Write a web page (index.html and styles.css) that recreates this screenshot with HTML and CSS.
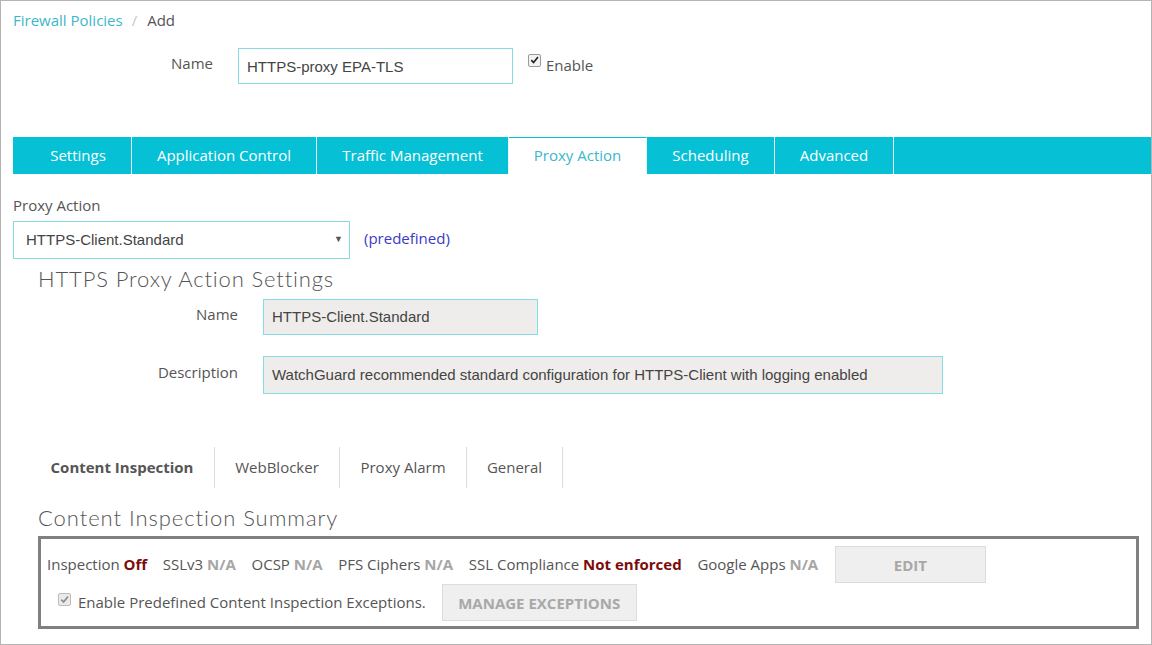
FILE: index.html
```html
<!DOCTYPE html>
<html>
<head>
<meta charset="utf-8">
<link rel="stylesheet" href="styles.css">
</head>
<body>
<div class="page">
  <div class="crumbs"><a class="crumb-link">Firewall Policies</a><span class="crumb-sep">/</span><span class="crumb-cur">Add</span></div>

  <div class="name-row">
    <label class="lbl name-lbl">Name</label>
    <div class="input name-input">HTTPS-proxy EPA-TLS</div>
    <label class="enable"><span class="cb checked"><svg viewBox="0 0 12 12" width="12" height="12"><path d="M2.5 6.2 L5 8.8 L9.8 2.8" fill="none" stroke="#222" stroke-width="1.8"/></svg></span>Enable</label>
  </div>

  <div class="tabs">
    <div class="tab t1">Settings</div>
    <div class="tab t2">Application Control</div>
    <div class="tab t3">Traffic Management</div>
    <div class="tab t4 active">Proxy Action</div>
    <div class="tab t5">Scheduling</div>
    <div class="tab t6">Advanced</div>
  </div>

  <div class="pa-label">Proxy Action</div>
  <div class="pa-row">
    <div class="select">HTTPS-Client.Standard<span class="arrow">&#9660;</span></div>
    <span class="predef">(predefined)</span>
  </div>

  <h2 class="heading h-settings">HTTPS Proxy Action Settings</h2>
  <div class="form-row r-name">
    <label class="lbl flabel">Name</label>
    <div class="input ro ro-name">HTTPS-Client.Standard</div>
  </div>
  <div class="form-row r-desc">
    <label class="lbl flabel">Description</label>
    <div class="input ro ro-desc">WatchGuard recommended standard configuration for HTTPS-Client with logging enabled</div>
  </div>

  <div class="subtabs">
    <div class="stab s1 active">Content Inspection</div>
    <div class="stab s2">WebBlocker</div>
    <div class="stab s3">Proxy Alarm</div>
    <div class="stab s4">General</div>
  </div>

  <h2 class="heading h-summary">Content Inspection Summary</h2>
  <div class="summary">
    <div class="sum-row">
      <span class="item">Inspection <b class="red">Off</b></span>
      <span class="item">SSLv3 <b class="na">N/A</b></span>
      <span class="item">OCSP <b class="na">N/A</b></span>
      <span class="item">PFS Ciphers <b class="na">N/A</b></span>
      <span class="item">SSL Compliance <b class="red">Not enforced</b></span>
      <span class="item">Google Apps <b class="na">N/A</b></span>
      <button class="btn edit">EDIT</button>
    </div>
    <div class="sum-row row2">
      <label class="exc"><span class="cb dis"><svg viewBox="0 0 12 12" width="11" height="11"><path d="M2.5 6.2 L5 8.8 L9.8 2.8" fill="none" stroke="#8a8a8a" stroke-width="1.8"/></svg></span>Enable Predefined Content Inspection Exceptions.</label>
      <button class="btn manage">MANAGE EXCEPTIONS</button>
    </div>
  </div>
</div>
</body>
</html>
```

FILE: styles.css
```css
* { box-sizing: border-box; }
html, body { margin: 0; padding: 0; background: #fff; }
body { font-family: "Open Sans", "Liberation Sans", sans-serif; color: #555; font-size: 15px; }
.page {
  width: 1152px; height: 645px; border: 1px solid #b4b4b4; overflow: hidden;
  padding: 0 0 0 12px;
}
.crumbs { height: 47px; padding-top: 9px; font-size: 15px; line-height: 20px; }
.crumb-link { color: #3db7c9; }
.crumb-sep { color: #c8c8c8; margin: 0 10px 0 9px; }
.crumb-cur { color: #555; }

.name-row { display: flex; align-items: center; height: 36px; }
.lbl { color: #555; font-size: 15px; }
.name-lbl { margin-left: 158px; width: 67px; margin-top: -6px; }
.input {
  border: 1px solid #85dde3; font-family: "Liberation Sans", Arial, sans-serif;
  font-size: 15px; color: #444; display: flex; align-items: center; padding-left: 8px; height: 36px;
}
.name-input { width: 275px; }
.enable { display: flex; align-items: center; margin-left: 15px; margin-top: -2px; font-size: 15px; color: #555; }
.cb {
  width: 13px; height: 13px; border: 1px solid #9a9a9a; border-radius: 2px; background: #f3f3f3;
  display: inline-flex; align-items: center; justify-content: center; margin-right: 5px; margin-top: -10px;
}
.cb.dis { border-color: #bcbcbc; background: #eaeaea; margin-top: -4px; }

.tabs {
  display: flex; margin-top: 53px; height: 37px; background: #06c1d5;
}
.tab {
  color: #fff; font-size: 15px; display: flex; align-items: center; justify-content: center;
  border-right: 1px solid #e8f8fa; height: 37px; padding-bottom: 2px;
}
.tab.active { background: #fff; color: #3db7c9; border-top: 1px solid #06c1d5; }
.t1 { width: 119px; padding-left: 12px; }
.t2 { width: 185px; }
.t3 { width: 192px; }
.t4 { width: 138px; }
.t5 { width: 128px; }
.t6 { width: 119px; }

.pa-label { margin-top: 21px; font-size: 15px; line-height: 20px; color: #555; }
.pa-row { display: flex; align-items: center; margin-top: 6px; }
.select {
  width: 337px; height: 38px; border: 1px solid #85dde3; font-family: "Liberation Sans", Arial, sans-serif;
  font-size: 15px; color: #444; display: flex; align-items: center; padding-left: 12px; padding-bottom: 2px; position: relative;
}
.arrow { position: absolute; right: 6px; top: 12px; font-size: 9px; color: #555; }
.predef { color: #3a3ac8; margin-left: 14px; font-size: 15px; margin-top: -5px; }

.heading {
  font-family: "Lato", "Open Sans", sans-serif; font-weight: 300; font-size: 22px; color: #555;
  margin: 0; padding-left: 25px; line-height: 28px; letter-spacing: 0.85px;
}
.h-settings { margin-top: 6px; }
.form-row { display: flex; align-items: center; }
.r-name { margin-top: 6px; }
.r-desc { margin-top: 21px; }
.flabel { width: 225px; text-align: right; padding-right: 0; margin-top: -6px; }
.ro { background: #efedeb; margin-left: 25px; padding-bottom: 2px; }
.ro-name { width: 275px; height: 36px; }
.ro-desc { width: 680px; height: 38px; }

.subtabs { display: flex; margin-top: 53px; padding-left: 25px; height: 41px; }
.stab {
  display: flex; align-items: center; justify-content: center; border-right: 1px solid #ddd;
  font-size: 15px; color: #555; height: 41px; padding-bottom: 2px;
}
.stab.active { font-weight: 700; font-size: 15px; padding-right: 8px; }
.s1 { width: 177px; }
.s2 { width: 125px; }
.s3 { width: 127px; }
.s4 { width: 96px; }

.h-summary { margin-top: 16px; letter-spacing: 0.95px; }
.summary {
  margin-left: 25px; margin-top: 4px; width: 1101px; height: 93px; border: 3px solid #808080;
  padding: 7px 0 0 6px;
}
.sum-row { display: flex; align-items: center; height: 37px; }
.item { font-size: 15px; color: #555; margin-right: 15.7px; white-space: nowrap; padding-bottom: 2px; }
.item b { font-weight: 700; }
.red { color: #7a0c0c; }
.na { color: #a6a6a6; }
.btn {
  font-family: "Open Sans", sans-serif; font-weight: 700; font-size: 15px; color: #a8a8a8;
  background: #efefef; border: 1px solid #dcdcdc; height: 37px; padding: 0;
}
.edit { width: 151px; margin-left: 1px; }
.row2 { margin-top: 1px; }
.exc { display: flex; align-items: center; font-size: 15px; color: #555; padding-left: 11px; margin-right: 16px; padding-bottom: 2px; }
.exc .cb { margin-right: 7px; }
.manage { width: 195px; }
```
